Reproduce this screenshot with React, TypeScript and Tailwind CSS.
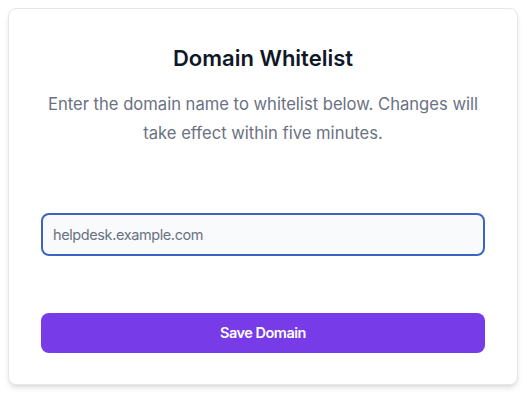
export default function App() {
  return (
    <div className="p-2 bg-white" style={{ fontFamily: 'Inter, "Noto Sans", sans-serif' }}>
      <div className="w-[510px] h-[377px] rounded-lg bg-white border border-gray-200 shadow-md px-8 pt-[33px] flex flex-col">
        <h1 className="text-[22px] font-semibold text-gray-900 text-center leading-[32px]">Domain Whitelist</h1>
        <p className="mt-[16px] text-[16.6px] leading-[29px] text-gray-500 text-center">
          Enter the domain name to whitelist below. Changes will take effect within five minutes.
        </p>
        <input
          className="mt-[65px] h-[43px] w-full rounded-lg border-2 border-[#3b64c4] bg-slate-50 px-[10px] text-[14.5px] tracking-[-0.4px] text-gray-700 placeholder:text-gray-500 outline-none"
          placeholder="helpdesk.example.com"
        />
        <button className="mt-[57px] h-[40px] w-full rounded-lg bg-[#773be8] text-white text-[14.5px] tracking-[-0.5px] font-semibold">
          Save Domain
        </button>
      </div>
    </div>
  );
}
